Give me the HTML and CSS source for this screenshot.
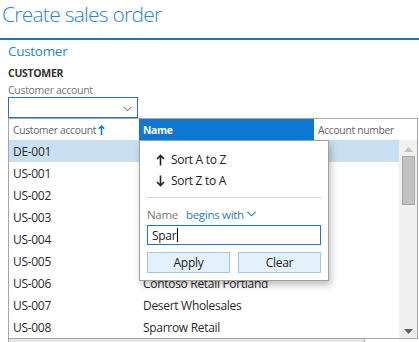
FILE: index.html
```html
<!DOCTYPE html>
<html>
<head>
<meta charset="utf-8">
<link rel="stylesheet" href="styles.css">
</head>
<body>
<h1 class="title">Create sales order</h1>
<div class="rule"></div>
<div class="section">
  <div class="section-head">Customer</div>
  <div class="group">CUSTOMER</div>
  <div class="label">Customer account</div>
  <div class="combo">
    <svg class="chev" width="9" height="6" viewBox="0 0 9 6"><path d="M0.5 0.8 L4.5 4.8 L8.5 0.8" fill="none" stroke="#555" stroke-width="1"/></svg>
  </div>
</div>
<div class="grid-wrap">
  <div class="grid">
    <div class="ghead">
      <div class="hc hc1">Customer account<svg class="sortarrow" width="7" height="10" viewBox="0 0 7 10"><path d="M3.5 1 V10 M0.8 3.8 L3.5 1 L6.2 3.8" fill="none" stroke="#1a7ad0" stroke-width="1.6"/></svg></div>
      <div class="hc hc2">Name</div>
      <div class="hc hc3">Account number</div>
    </div>
    <div class="gbody">
      <div class="rows">
        <div class="row sel"><span class="c1">DE-001</span><span class="c2"></span></div>
        <div class="row"><span class="c1">US-001</span><span class="c2"></span></div>
        <div class="row"><span class="c1">US-002</span><span class="c2"></span></div>
        <div class="row"><span class="c1">US-003</span><span class="c2"></span></div>
        <div class="row"><span class="c1">US-004</span><span class="c2"></span></div>
        <div class="row"><span class="c1">US-005</span><span class="c2"></span></div>
        <div class="row"><span class="c1">US-006</span><span class="c2">Contoso Retail Portland</span></div>
        <div class="row"><span class="c1">US-007</span><span class="c2">Desert Wholesales</span></div>
        <div class="row"><span class="c1">US-008</span><span class="c2">Sparrow Retail</span></div>
      </div>
      <div class="vscroll">
        <svg class="arr" width="9" height="5" viewBox="0 0 9 5"><path d="M0 5 L4.5 0 L9 5 Z" fill="#c2c2c2"/></svg>
        <div class="thumb"></div>
        <div class="spacer"></div>
        <svg class="arr" width="9" height="5" viewBox="0 0 9 5"><path d="M0 0 L9 0 L4.5 5 Z" fill="#606060"/></svg>
      </div>
    </div>
  </div>
  <div class="hscroll"><div class="htrack"></div></div>
  <div class="popup">
    <div class="sortitem"><svg width="9" height="12" viewBox="0 0 9 12"><path d="M4.5 1.5 V11.5 M1 5 L4.5 1.5 L8 5" fill="none" stroke="#222" stroke-width="1.6"/></svg><span>Sort A to Z</span></div>
    <div class="sortitem"><svg width="9" height="12" viewBox="0 0 9 12"><path d="M4.5 0.5 V10.5 M1 7 L4.5 10.5 L8 7" fill="none" stroke="#222" stroke-width="1.6"/></svg><span>Sort Z to A</span></div>
    <div class="sep"></div>
    <div class="filterline"><span class="fname">Name</span><span class="fop">begins with</span><svg width="9" height="6" viewBox="0 0 9 6"><path d="M0.5 0.8 L4.5 4.8 L8.5 0.8" fill="none" stroke="#2a78c6" stroke-width="1.1"/></svg></div>
    <div class="finput">Spar<span class="caret"></span></div>
    <div class="btns">
      <div class="btn">Apply</div>
      <div class="btn">Clear</div>
    </div>
  </div>
</div>
</body>
</html>
```

FILE: styles.css
```css
* { box-sizing: border-box; }
html, body { margin: 0; padding: 0; background: #fff; }
body {
  font-family: "Open Sans", "Noto Sans", sans-serif;
  color: #222;
  width: 419px;
  height: 342px;
  overflow: hidden;
  letter-spacing: -0.3px;
}
.title {
  margin: 0;
  padding: 0 0 0 2px;
  height: 38px;
  font-size: 21px;
  font-weight: 300;
  line-height: 28px;
  color: #2b85d0;
  letter-spacing: -0.75px;
}
.rule {
  height: 2px;
  background: #1f74bf;
}
.section { padding: 0 0 0 8px; }
.section-head {
  font-size: 13.5px;
  line-height: 18px;
  margin-top: 2px;
  color: #2b85d0;
}
.group {
  margin-top: 6px;
  font-size: 10.5px;
  font-weight: 700;
  line-height: 14px;
  color: #333;
}
.label {
  margin-top: 3px;
  font-size: 10.5px;
  line-height: 14px;
  color: #777;
}
.combo {
  width: 130px;
  height: 21px;
  border: 1px solid #2a72b5;
  display: flex;
  justify-content: flex-end;
  align-items: center;
  padding-right: 5px;
}
.chev { margin-top: 3px; }
.grid-wrap {
  position: relative;
  margin-left: 8px;
  width: 410px;
}
.grid {
  border: 1px solid #a6a6a6;
  background: #fff;
}
.ghead {
  display: grid;
  grid-template-columns: 130px 175px 1fr;
  height: 21px;
  font-size: 10.3px;
}
.hc {
  display: flex;
  align-items: center;
  padding-left: 4px;
  color: #666;
}
.hc2 {
  background: #0f78d4;
  color: #fff;
  font-weight: 700;
}
.sortarrow { margin-left: 2px; }
.gbody { display: flex; }
.rows { flex: 1; }
.row {
  height: 22px;
  display: flex;
  align-items: center;
  font-size: 12px;
  color: #2a2a2a;
}
.row.sel { background: #c9dff2; }
.c1 { width: 130px; padding-left: 4px; }
.c2 { padding-left: 4px; }
.vscroll {
  width: 18px;
  background: #f0f0f0;
  display: flex;
  flex-direction: column;
  align-items: center;
  padding: 7px 0 4px;
}
.arr { flex: none; }
.thumb {
  margin-top: 4px;
  width: 13px;
  height: 49px;
  background: #c1c1c1;
  border: 1px solid #a9a9a9;
}
.spacer { flex: 1; }
.hscroll {
  height: 4px;
  display: flex;
}
.htrack {
  width: 357px;
  background: #e6e6e6;
  border-left: 1px solid #a6a6a6;
  border-right: 1px solid #a6a6a6;
}
.popup {
  position: absolute;
  left: 131px;
  top: 22px;
  width: 190px;
  height: 141px;
  background: #fff;
  border: 1px solid #a0a0a0;
  box-shadow: 2px 4px 7px rgba(0, 0, 0, 0.25);
  padding: 8px 7px 0 7px;
}
.sortitem {
  display: flex;
  align-items: center;
  height: 21px;
  padding-left: 9px;
  font-size: 12px;
  color: #222;
}
.sortitem svg { margin-right: 6px; }
.sep {
  margin-top: 6px;
  height: 1px;
  background: #d6d6d6;
}
.filterline {
  margin-top: 8px;
  height: 16px;
  display: flex;
  align-items: center;
  font-size: 11.5px;
}
.fname { color: #777; }
.fop { color: #2a78c6; margin-left: 8px; margin-right: 3px; }
.finput {
  margin-top: 3px;
  height: 20px;
  border: 1px solid #1a78cf;
  font-size: 12px;
  padding-left: 4px;
  display: flex;
  align-items: center;
}
.caret {
  display: inline-block;
  width: 1px;
  height: 14px;
  background: #000;
  margin-left: 1px;
}
.btns {
  margin-top: 7px;
  display: flex;
  gap: 8px;
}
.btn {
  flex: 1;
  height: 21px;
  background: #e4f0fa;
  border: 1px solid #9ccaee;
  font-size: 12px;
  display: flex;
  align-items: center;
  justify-content: center;
  color: #222;
}
```
